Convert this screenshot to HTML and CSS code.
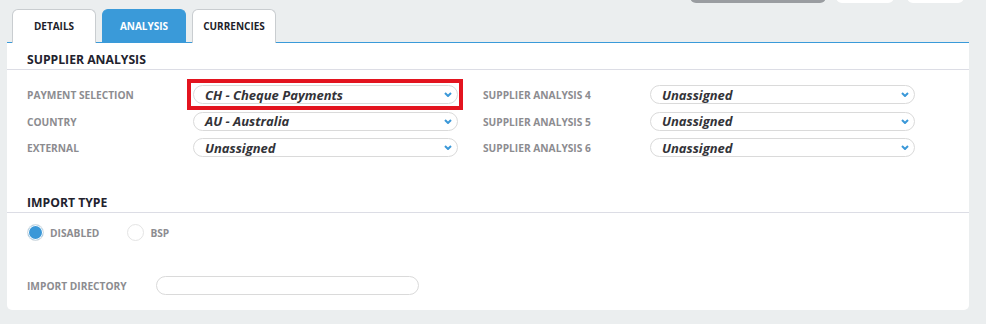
FILE: index.html
```html
<!DOCTYPE html>
<html>
<head>
<meta charset="utf-8">
<link rel="stylesheet" href="styles.css">
</head>
<body>
<div class="toolbar">
  <span class="tb-btn tb-gray"></span>
  <span class="tb-btn tb-white w1"></span>
  <span class="tb-btn tb-white w2"></span>
</div>
<div class="tabs">
  <div class="tab">DETAILS</div>
  <div class="tab active">ANALYSIS</div>
  <div class="tab">CURRENCIES</div>
</div>
<div class="panel">
  <div class="section-title">SUPPLIER ANALYSIS</div>
  <div class="fields">
    <div class="col">
      <div class="row"><span class="label">PAYMENT SELECTION</span><span class="select highlight"><span class="val">CH - Cheque Payments</span><svg class="chev" viewBox="0 0 8 5"><path d="M1 1 L4 4 L7 1"/></svg></span></div>
      <div class="row"><span class="label">COUNTRY</span><span class="select"><span class="val">AU - Australia</span><svg class="chev" viewBox="0 0 8 5"><path d="M1 1 L4 4 L7 1"/></svg></span></div>
      <div class="row"><span class="label">EXTERNAL</span><span class="select"><span class="val">Unassigned</span><svg class="chev" viewBox="0 0 8 5"><path d="M1 1 L4 4 L7 1"/></svg></span></div>
    </div>
    <div class="col">
      <div class="row"><span class="label">SUPPLIER ANALYSIS 4</span><span class="select"><span class="val">Unassigned</span><svg class="chev" viewBox="0 0 8 5"><path d="M1 1 L4 4 L7 1"/></svg></span></div>
      <div class="row"><span class="label">SUPPLIER ANALYSIS 5</span><span class="select"><span class="val">Unassigned</span><svg class="chev" viewBox="0 0 8 5"><path d="M1 1 L4 4 L7 1"/></svg></span></div>
      <div class="row"><span class="label">SUPPLIER ANALYSIS 6</span><span class="select"><span class="val">Unassigned</span><svg class="chev" viewBox="0 0 8 5"><path d="M1 1 L4 4 L7 1"/></svg></span></div>
    </div>
  </div>
  <div class="section-title second">IMPORT TYPE</div>
  <div class="radios">
    <label class="radio"><span class="dot on"></span><span class="rlabel">DISABLED</span></label>
    <label class="radio"><span class="dot"></span><span class="rlabel">BSP</span></label>
  </div>
  <div class="dir-row">
    <span class="label dir-label">IMPORT DIRECTORY</span>
    <span class="input"></span>
  </div>
</div>
</body>
</html>
```

FILE: styles.css
```css
* { box-sizing: border-box; }
body {
  margin: 0;
  background: #ebeeef;
  font-family: "Open Sans", "Liberation Sans", sans-serif;
  width: 986px;
  height: 324px;
  overflow: hidden;
}
.toolbar {
  height: 3px;
  overflow: hidden;
  display: flex;
  justify-content: flex-end;
  align-items: flex-end;
  padding-right: 22px;
}
.tb-btn {
  display: block;
  height: 30px;
  border-radius: 0 0 6px 6px;
  flex: none;
}
.tb-gray { width: 136px; background: #9a9da1; margin-right: 10px; }
.tb-white { background: #ffffff; }
.w1 { width: 58px; margin-right: 13px; }
.w2 { width: 57px; }
.tabs {
  display: flex;
  gap: 6px;
  margin-top: 6px;
  padding-left: 12px;
  height: 33px;
}
.tab {
  width: 84px;
  height: 34px;
  border: 1px solid #c9cdd0;
  border-bottom: none;
  border-radius: 6px 6px 0 0;
  background: #fff;
  display: flex;
  align-items: center;
  justify-content: center;
  font-size: 10px;
  font-weight: 700;
  color: #1e1e2a;
  padding-bottom: 1px;
  position: relative;
  z-index: 1;
}
.tab.active {
  background: #3a9ad9;
  border-color: #3a9ad9;
  color: #fff;
}
.panel {
  margin: 0 17px 0 7px;
  background: #fff;
  border-top: 1px solid #3a9ad9;
  border-radius: 0 0 5px 5px;
  height: 268px;
}
.section-title {
  height: 27px;
  padding: 8px 0 0 20px;
  font-size: 12.2px;
  line-height: 18px;
  font-weight: 700;
  color: #22222e;
  border-bottom: 1px solid #dcdde5;
}
.section-title.second {
  margin-top: 28px;
  height: 28px;
  padding-top: 9px;
}
.fields {
  display: flex;
  padding: 15px 0 0 20px;
  gap: 25px;
}
.col {
  display: flex;
  flex-direction: column;
  gap: 7.5px;
}
.row {
  display: flex;
  align-items: center;
  height: 19px;
}
.label {
  font-size: 10.2px;
  font-weight: 700;
  color: #8c8c90;
  width: 166px;
  flex: none;
  padding-top: 1px;
}
.col + .col .label { width: 167px; }
.select {
  width: 265px;
  height: 19px;
  border: 1px solid #dadada;
  border-radius: 10px;
  display: flex;
  align-items: center;
  justify-content: space-between;
  padding: 0 5px 0 11px;
  position: relative;
}
.val {
  font-size: 13px;
  font-weight: 700;
  font-style: italic;
  color: #333338;
  white-space: nowrap;
}
.chev {
  width: 8px;
  height: 5px;
  fill: none;
  stroke: #3a98d8;
  stroke-width: 2;
}
.highlight::after {
  content: "";
  position: absolute;
  left: -7px;
  right: -6px;
  top: -7px;
  bottom: -7px;
  border: 4px solid #e3141f;
}
.radios {
  display: flex;
  padding: 11px 0 0 20px;
  height: 41px;
}
.radio {
  display: flex;
  align-items: center;
  height: 17px;
}
.radio + .radio { margin-left: 28px; }
.dot {
  width: 17px;
  height: 17px;
  border-radius: 50%;
  border: 1px solid #e4e4e4;
  background: #fff;
  margin-right: 6px;
  flex: none;
}
.dot.on {
  background: #3a98d8;
  box-shadow: inset 0 0 0 1px #fff;
}
.rlabel {
  font-size: 10.2px;
  font-weight: 700;
  color: #8c8c90;
}
.dir-row {
  display: flex;
  align-items: center;
  padding: 22px 0 0 20px;
}
.dir-label { width: 129px; }
.input {
  width: 263px;
  height: 19px;
  border: 1px solid #dadada;
  border-radius: 10px;
}
```
